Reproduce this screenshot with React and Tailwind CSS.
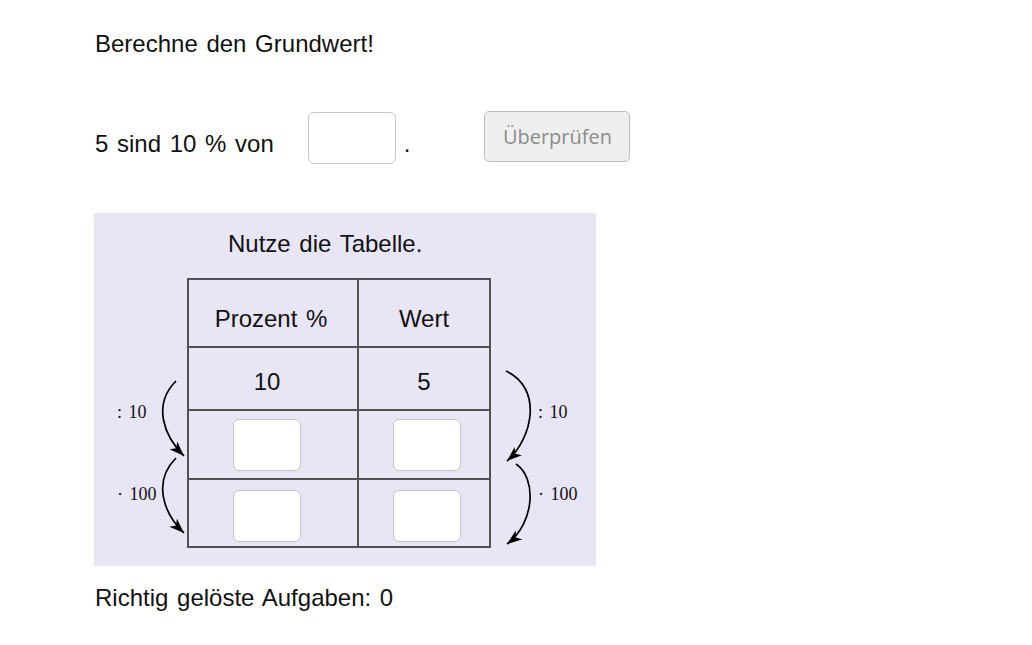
const sans = { fontFamily: '"Liberation Sans", Arial, sans-serif', wordSpacing: '2px' };

const Arrows = ({ side }) => {
  const left = side === 'left';
  const id = left ? 'headL' : 'headR';
  const paths = left
    ? ['M82 103 C 58 127, 70 158, 90 178', 'M82 180 C 58 204, 70 236, 90 255']
    : ['M15 93 C 52 110, 42 160, 16 183', 'M25 186 C 46 200, 44 245, 16 266'];
  const x = left ? 23 : 47;
  return (
    <svg width={left ? 93 : 105} height="270" className="shrink-0 overflow-visible">
      <defs>
        <marker id={id} markerUnits="userSpaceOnUse" markerWidth="18" markerHeight="12" refX="15" refY="5.5" orient="auto">
          <path d="M0,0 L15,5.5 L0,11 L4,5.5 Z" fill="#000" />
        </marker>
      </defs>
      {paths.map(d => (
        <path key={d} d={d} fill="none" stroke="#000" strokeWidth="1.7" markerEnd={`url(#${id})`} />
      ))}
      <text x={x} y="140" fontSize="18" fontFamily='"Liberation Serif", serif' fill="#111">: 10</text>
      <text x={x} y="222" fontSize="18" fontFamily='"Liberation Serif", serif' fill="#111">· 100</text>
    </svg>
  );
};

const Box = () => (
  <div className="w-[68px] h-[52px] bg-white border border-[#c6c6c6] rounded-[6px]" />
);

const App = () => {
  return (
    <div className="min-h-screen bg-white pl-[95px] pt-[30px] text-[24px] leading-[28px] text-[#111]" style={sans}>
      <div>Berechne den Grundwert!</div>

      <div className="flex items-center h-[53px] mt-[53px]">
        <span className="pt-[12px]">5 sind 10 % von</span>
        <div className="ml-[34px] w-[88px] h-[52px] bg-white border border-[#c6c6c6] rounded-[6px]" />
        <span className="ml-[8px] pt-[12px]">.</span>
        <button
          className="ml-[74px] w-[146px] h-[51px] -mt-[2px] bg-[#efefef] border border-[#bdbdbd] rounded-[5px] text-[20px] text-[#8c8c8c]"
          style={{ fontFamily: '"Open Sans", sans-serif', wordSpacing: 0 }}
        >
          Überprüfen
        </button>
      </div>

      <div className="-ml-px mt-[49px] w-[502px] h-[353px] bg-[#e8e5f5] pt-[17px]">
        <div className="pl-[134px]">Nutze die Tabelle.</div>
        <div className="flex mt-[20px]">
          <Arrows side="left" />
          <div className="w-[304px] h-[270px] border-2 border-[#525252] grid grid-cols-[170px_130px] grid-rows-[68px_63px_69px_66px] text-[24px]">
            <div className="flex items-center justify-center border-r-2 border-b-2 border-[#525252] pt-[12px] pr-[4px]">Prozent %</div>
            <div className="flex items-center justify-center border-b-2 border-[#525252] pt-[12px]">Wert</div>
            <div className="flex items-center justify-center border-r-2 border-b-2 border-[#525252] pt-[6px] pr-[12px]">10</div>
            <div className="flex items-center justify-center border-b-2 border-[#525252] pt-[6px]">5</div>
            <div className="flex items-start justify-center border-r-2 border-b-2 border-[#525252] pt-[8px] pr-[12px]"><Box /></div>
            <div className="flex items-start justify-center border-b-2 border-[#525252] pt-[8px] pl-[6px]"><Box /></div>
            <div className="flex items-start justify-center border-r-2 border-[#525252] pt-[10px] pr-[12px]"><Box /></div>
            <div className="flex items-start justify-center pt-[10px] pl-[6px]"><Box /></div>
          </div>
          <Arrows side="right" />
        </div>
      </div>

      <div className="mt-[18px]">Richtig gelöste Aufgaben: 0</div>
    </div>
  );
};

export default App;
